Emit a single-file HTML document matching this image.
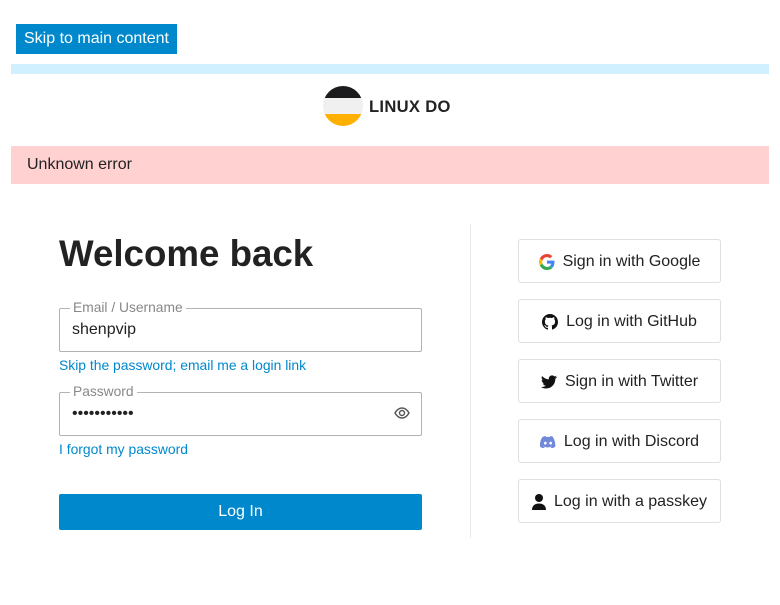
<!DOCTYPE html>
<html><head><meta charset="utf-8"><style>
*{box-sizing:border-box}
body{margin:0;width:780px;height:605px;background:#fff;font-family:"Liberation Sans",sans-serif;color:#222;position:relative;overflow:hidden}
.abs{position:absolute}
.skip{left:16px;top:24px;width:161px;height:30px;background:#0088cc;color:#fff;font-size:16px;line-height:30px;padding-left:8px}
.bar{left:11px;top:64px;width:758px;height:10px;background:#d1f0ff}
.err{left:11px;top:146px;width:758px;height:38px;background:#ffd1d1;font-size:16px;line-height:38px;padding-left:16px;color:#222}
h1{position:absolute;left:59px;top:233px;margin:0;font-size:36.7px;font-weight:bold;color:#222}
.field{left:59px;width:363px;height:44px;border:1px solid #b3b3b3;border-radius:2px}
.lbl{position:absolute;top:-9px;left:10px;background:#fff;padding:0 3px;font-size:13.8px;color:#888}
.val{position:absolute;left:12px;top:12px;font-size:16px;color:#222}
.link{left:59px;font-size:13.9px;color:#0088cc}
.btn{left:59px;top:494px;width:363px;height:36px;background:#0088cc;color:#fff;font-size:16px;text-align:center;line-height:36px;border-radius:2px}
.div{left:470px;top:224px;width:1px;height:314px;background:#e9e9e9}
.sb{left:518px;width:203px;height:44px;border:1px solid #e0e0e0;border-radius:3px;font-size:16px;color:#222;display:flex;align-items:center;justify-content:center;gap:8px;padding-top:1px}
.sb svg{flex:none}
</style></head><body>
<div class="abs skip">Skip to main content</div>
<div class="abs bar"></div>
<svg class="abs" style="left:322px;top:85px" width="42" height="42" viewBox="0 0 42 42">
<clipPath id="c"><circle cx="21" cy="21" r="20"/></clipPath>
<g clip-path="url(#c)"><rect width="42" height="13" fill="#1c1c1e"/><rect y="13" width="42" height="16" fill="#f0f0f0"/><rect y="29" width="42" height="13" fill="#ffb003"/></g></svg>
<div class="abs" style="left:369px;top:97px;font-size:16.6px;font-weight:bold;color:#222;letter-spacing:0.3px">LINUX DO</div>
<div class="abs err">Unknown error</div>
<h1>Welcome back</h1>
<div class="abs field" style="top:308px"><span class="lbl">Email / Username</span><span class="val">shenpvip</span></div>
<div class="abs link" style="top:357px">Skip the password; email me a login link</div>
<div class="abs field" style="top:392px"><span class="lbl">Password</span><span class="val">•••••••••••</span>
<svg style="position:absolute;right:11px;top:13px" width="16" height="14" viewBox="0 0 16 14"><path d="M1 7C3 3.5 5.5 2 8 2s5 1.5 7 5c-2 3.5-4.5 5-7 5S3 10.5 1 7z" fill="none" stroke="#555" stroke-width="1.4"/><circle cx="8" cy="7" r="2.5" fill="none" stroke="#555" stroke-width="1.4"/></svg></div>
<div class="abs link" style="top:441px">I forgot my password</div>
<div class="abs btn">Log In</div>
<div class="abs div"></div>
<div class="abs sb" style="top:239px"><svg width="16" height="16" viewBox="0 0 48 48"><path fill="#EA4335" d="M24 9.5c3.5 0 6.6 1.2 9.1 3.6l6.8-6.8C35.8 2.4 30.2 0 24 0 14.6 0 6.6 5.4 2.7 13.2l7.9 6.2C12.5 13.6 17.8 9.5 24 9.5z"/><path fill="#4285F4" d="M46.5 24.5c0-1.6-.2-3.1-.4-4.5H24v9h12.7c-.6 2.9-2.2 5.4-4.7 7.1l7.7 6C44.1 38 46.5 31.8 46.5 24.5z"/><path fill="#FBBC05" d="M10.5 28.6c-.5-1.4-.8-3-.8-4.6s.3-3.2.8-4.6l-7.9-6.2C1 16.5 0 20.1 0 24s1 7.5 2.7 10.8l7.8-6.2z"/><path fill="#34A853" d="M24 48c6.5 0 11.9-2.1 15.9-5.8l-7.7-6c-2.2 1.5-5 2.3-8.2 2.3-6.2 0-11.5-4.2-13.4-9.9l-7.9 6.1C6.6 42.6 14.6 48 24 48z"/></svg>Sign in with Google</div>
<div class="abs sb" style="top:299px"><svg width="16" height="16" viewBox="0 0 16 16"><path fill="#111" d="M8 0C3.6 0 0 3.6 0 8c0 3.5 2.3 6.5 5.5 7.6.4.1.5-.2.5-.4v-1.4c-2.2.5-2.7-1-2.7-1-.4-.9-.9-1.2-.9-1.2-.7-.5.1-.5.1-.5.8.1 1.2.8 1.2.8.7 1.3 1.9.9 2.3.7.1-.5.3-.9.5-1.100-1.800-.2-3.600-.9-3.600-4 0-.9.3-1.6.8-2.100-.1-.2-.4-1 .1-2.100 0 0 .7-.2 2.2.8.6-.2 1.3-.3 2-.3s1.4.1 2 .3c1.5-1 2.2-.8 2.2-.8.4 1.1.2 1.9.1 2.1.5.6.8 1.3.8 2.1 0 3.1-1.9 3.7-3.6 3.9.3.3.5.8.5 1.5v2.2c0 .2.1.5.6.4C13.7 14.5 16 11.5 16 8c0-4.4-3.6-8-8-8z"/></svg>Log in with GitHub</div>
<div class="abs sb" style="top:359px"><svg width="16" height="14" viewBox="0 0 24 20"><path fill="#111" d="M24 2.4c-.9.4-1.8.7-2.8.8 1-.6 1.8-1.6 2.2-2.7-1 .6-2 1-3.1 1.2C19.3.7 18 .1 16.6.1c-2.7 0-4.9 2.2-4.9 4.9 0 .4 0 .8.1 1.1C7.7 5.9 4.1 4 1.7 1 1.2 1.7 1 2.600 1 3.500c0 1.700.9 3.200 2.200 4.100-.8 0-1.600-.2-2.200-.6v.1c0 2.400 1.700 4.400 3.900 4.800-.4.1-.8.2-1.300.2-.3 0-.6 0-.9-.1.6 2 2.400 3.400 4.600 3.400-1.700 1.300-3.800 2.100-6.100 2.100H0c2.200 1.400 4.800 2.200 7.500 2.200 9.100 0 14-7.500 14-14v-.6c1-.7 1.800-1.600 2.500-2.500z"/></svg>Sign in with Twitter</div>
<div class="abs sb" style="top:419px"><svg width="16" height="12" viewBox="0 0 24 18"><path fill="#7289da" d="M20.3 1.5C18.7.8 17 .3 15.3 0l-.7 1.5c-1.8-.3-3.6-.3-5.3 0L8.7 0C6.9.3 5.3.8 3.7 1.5.4 6.4-.5 11.2 0 16c2 1.5 3.9 2.4 5.8 3l1.2-2c-.7-.2-1.3-.5-1.9-.9l.5-.4c3.8 1.8 7.9 1.8 11.7 0l.5.4c-.6.4-1.2.7-1.9.9l1.2 2c1.9-.6 3.8-1.5 5.8-3 .5-5.6-.9-10.4-3.7-14.5zM8 13c-1.1 0-2-1-2-2.3S6.9 8.4 8 8.4s2.1 1 2 2.3c0 1.3-.9 2.3-2 2.3zm8 0c-1.1 0-2-1-2-2.3s.9-2.3 2-2.3 2.1 1 2 2.3c0 1.3-.9 2.3-2 2.3z"/></svg>Log in with Discord</div>
<div class="abs sb" style="top:479px"><svg width="14" height="16" viewBox="0 0 14 16"><circle cx="7" cy="4" r="4" fill="#111"/><path fill="#111" d="M0 16c0-4 2.5-6.5 7-6.5s7 2.5 7 6.5z"/></svg>Log in with a passkey</div>
</body></html>
